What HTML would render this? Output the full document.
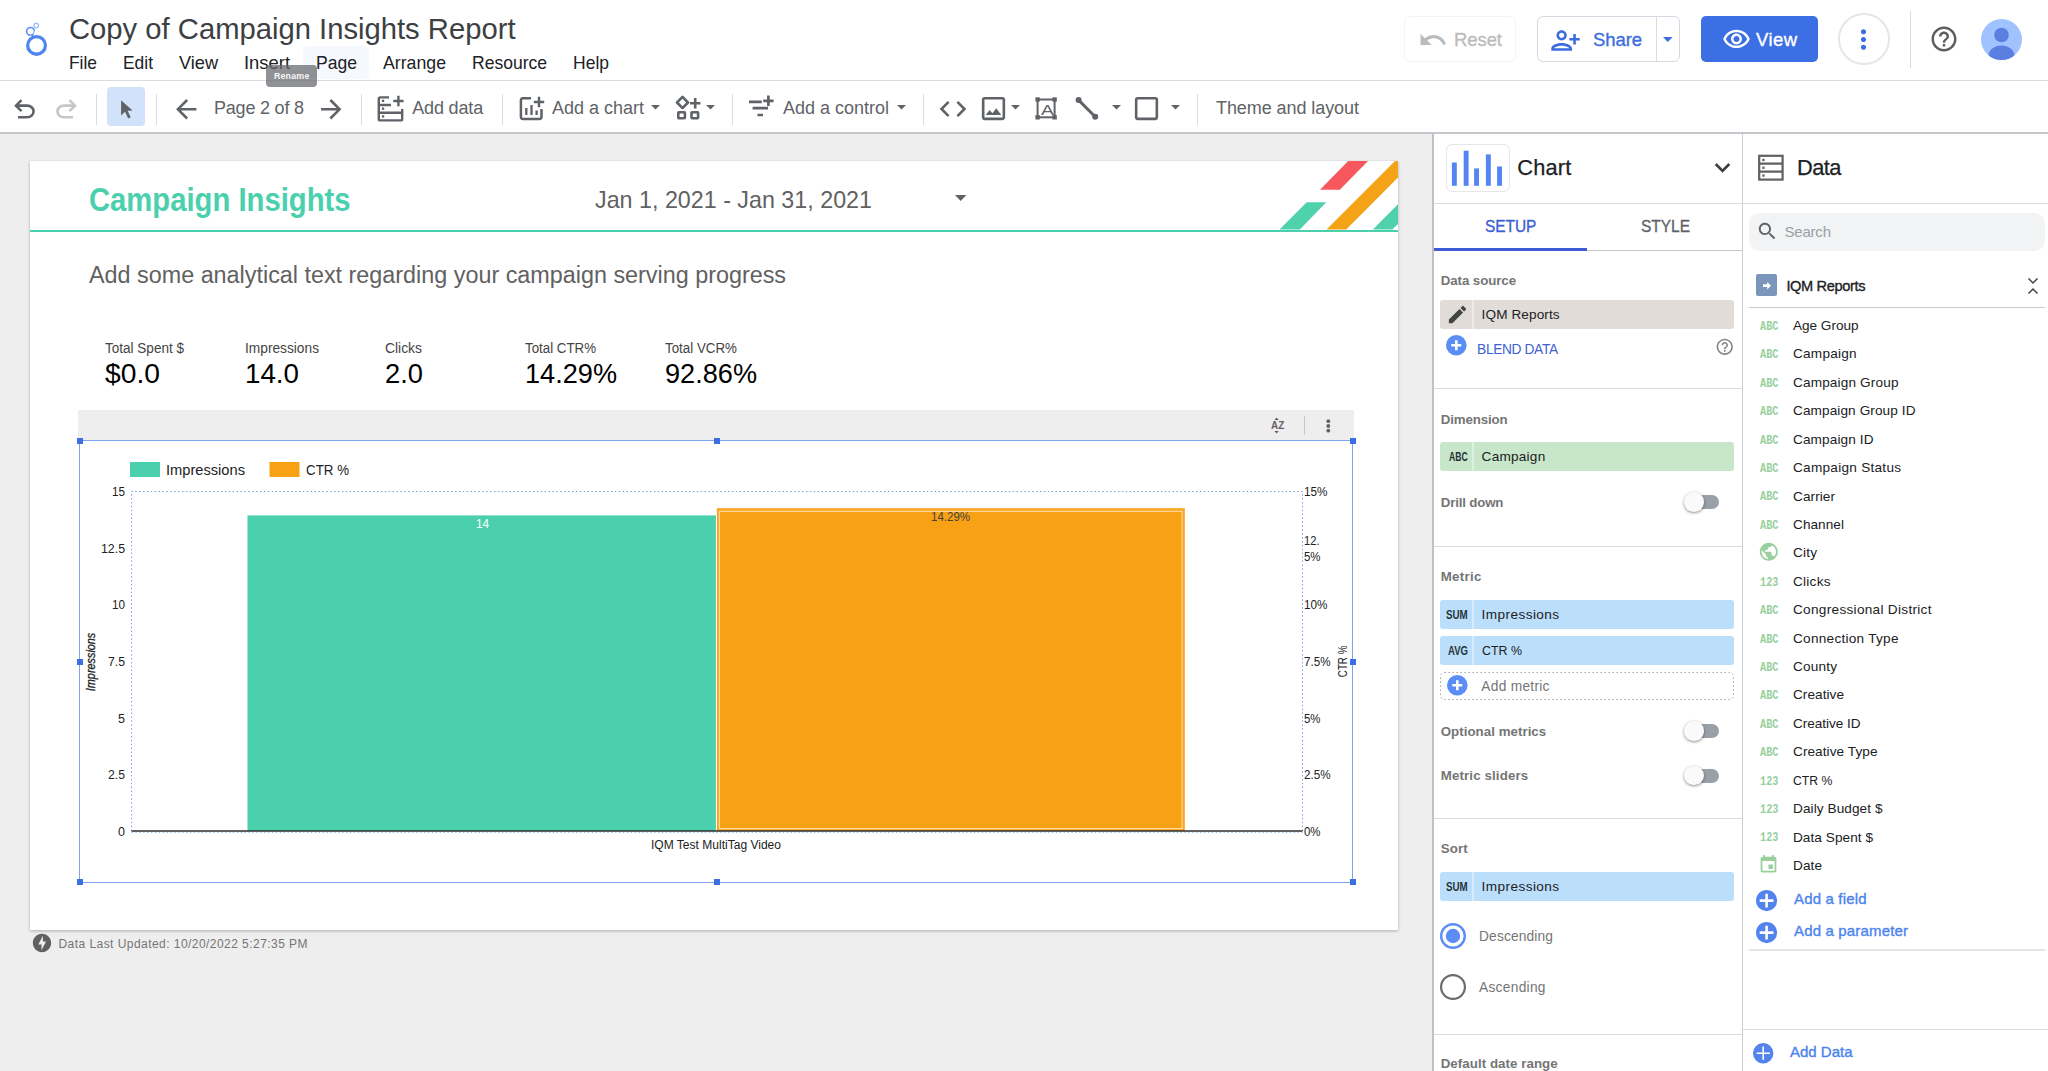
<!DOCTYPE html>
<html lang="en"><head><meta charset="utf-8"><title>Copy of Campaign Insights Report</title>
<style>
html,body{margin:0;padding:0;}
body{width:2048px;height:1071px;overflow:hidden;position:relative;background:#fff;font-family:"Liberation Sans",sans-serif;}
.a{position:absolute;box-sizing:border-box;}
.t{position:absolute;white-space:pre;}
svg{position:absolute;overflow:visible;}
</style></head>
<body>
<div class="a" style="left:0px;top:0px;width:2048px;height:80px;background:#fff;"></div>
<div class="a" style="left:0px;top:80px;width:2048px;height:1px;background:#dadce0;"></div>
<svg style="left:20px;top:18px" width="34" height="44" viewBox="0 0 34 44"><circle cx="10.5" cy="13.4" r="3.85" fill="none" stroke="#5b8ff5" stroke-width="1.6"/><path d="M12.4 16.2 L13.9 20.2" stroke="#4f86ee" stroke-width="1.8"/><path d="M16.1 9.6 L13.3 19.4" stroke="#fff" stroke-width="1.1"/><circle cx="16.55" cy="27.4" r="8.85" fill="none" stroke="#4f86ee" stroke-width="3.3"/><circle cx="16.2" cy="7.6" r="2.3" fill="none" stroke="#8ab4f8" stroke-width="1.05"/></svg>
<span class="t" style='left:68.60px;top:13.60px;font-size:29.5px;line-height:29.5px;color:#3c4043;font-family:"Liberation Sans", sans-serif;transform:scaleX(0.9902);transform-origin:0 50%;'>Copy of Campaign Insights Report</span>
<div class="a" style="left:303.4px;top:46.2px;width:65.6px;height:32.5px;background:#f5f8fd;border-radius:5px;"></div>
<span class="t" style='left:69.00px;top:53.71px;font-size:18.2px;line-height:18.2px;color:#202124;font-family:"Liberation Sans", sans-serif;transform:scaleX(0.9552);transform-origin:0 50%;'>File</span>
<span class="t" style='left:123.00px;top:53.71px;font-size:18.2px;line-height:18.2px;color:#202124;font-family:"Liberation Sans", sans-serif;transform:scaleX(0.9571);transform-origin:0 50%;'>Edit</span>
<span class="t" style='left:179.00px;top:53.71px;font-size:18.2px;line-height:18.2px;color:#202124;font-family:"Liberation Sans", sans-serif;transform:scaleX(0.9976);transform-origin:0 50%;'>View</span>
<span class="t" style='left:244.00px;top:53.71px;font-size:18.2px;line-height:18.2px;color:#202124;font-family:"Liberation Sans", sans-serif;transform:scaleX(1.0110);transform-origin:0 50%;'>Insert</span>
<span class="t" style='left:316.00px;top:53.71px;font-size:18.2px;line-height:18.2px;color:#202124;font-family:"Liberation Sans", sans-serif;transform:scaleX(0.9651);transform-origin:0 50%;'>Page</span>
<span class="t" style='left:383.00px;top:53.71px;font-size:18.2px;line-height:18.2px;color:#202124;font-family:"Liberation Sans", sans-serif;transform:scaleX(0.9734);transform-origin:0 50%;'>Arrange</span>
<span class="t" style='left:472.00px;top:53.71px;font-size:18.2px;line-height:18.2px;color:#202124;font-family:"Liberation Sans", sans-serif;transform:scaleX(0.9635);transform-origin:0 50%;'>Resource</span>
<span class="t" style='left:573.00px;top:53.71px;font-size:18.2px;line-height:18.2px;color:#202124;font-family:"Liberation Sans", sans-serif;transform:scaleX(0.9624);transform-origin:0 50%;'>Help</span>
<div class="a" style="left:1404px;top:16px;width:112px;height:45.5px;background:#fff;border:1px solid #f1f3f4;border-radius:6px;"></div>
<svg style="left:1418.3px;top:25.2px" width="30" height="30" viewBox="0 0 24 24" ><path fill="#bcbcbc" d="M12.5 8c-2.65 0-5.05.99-6.9 2.6L2 7v9h9l-3.62-3.62c1.39-1.16 3.16-1.88 5.12-1.88 3.54 0 6.55 2.31 7.6 5.5l2.37-.78C21.08 11.03 17.15 8 12.5 8z"/></svg>
<span class="t" style='left:1454.00px;top:31.01px;font-size:18.5px;line-height:18.5px;color:#bcbcbc;font-family:"Liberation Sans", sans-serif;letter-spacing:-0.082px;-webkit-text-stroke:.35px;'>Reset</span>
<div class="a" style="left:1537px;top:16px;width:142.7px;height:45.5px;background:#fff;border:1px solid #d5d9e2;border-radius:6px;"></div>
<div class="a" style="left:1656px;top:17px;width:1px;height:43.5px;background:#dadce0;"></div>
<svg style="left:1549.8px;top:24.8px" width="31" height="31" viewBox="0 0 24 24" ><path fill="#3c6de0" d="M13 8c0-2.21-1.79-4-4-4S5 5.79 5 8s1.79 4 4 4 4-1.79 4-4zm-2 0c0 1.1-.9 2-2 2s-2-.9-2-2 .9-2 2-2 2 .9 2 2zM1 18v2h16v-2c0-2.66-5.33-4-8-4s-8 1.34-8 4zm2 0c.2-.71 3.3-2 6-2 2.69 0 5.78 1.28 6 2H3zm17-3v-3h3v-2h-3V7h-2v3h-3v2h3v3h2z"/></svg>
<span class="t" style='left:1593.00px;top:31.01px;font-size:18.5px;line-height:18.5px;color:#3c6de0;font-family:"Liberation Sans", sans-serif;letter-spacing:-0.094px;-webkit-text-stroke:.35px;'>Share</span>
<svg style="left:1663.10px;top:37.20px" width="9.6" height="5" viewBox="0 0 9.6 5"><path fill="#3c6de0" d="M0 0 H9.6 L4.8 5 Z"/></svg>
<div class="a" style="left:1701.3px;top:16px;width:116.3px;height:46px;background:#3b6fe3;border-radius:5px;"></div>
<svg style="left:1721.5px;top:24.5px" width="29" height="29" viewBox="0 0 24 24" ><path fill="#fff" d="M12 6c3.79 0 7.17 2.13 8.82 5.5C19.17 14.87 15.79 17 12 17s-7.17-2.13-8.82-5.5C4.83 8.13 8.21 6 12 6m0-2C7 4 2.73 7.11 1 11.5 2.73 15.89 7 19 12 19s9.27-3.11 11-7.5C21.27 7.11 17 4 12 4zm0 5c1.38 0 2.5 1.12 2.5 2.5S13.38 14 12 14s-2.5-1.12-2.5-2.5S10.62 9 12 9m0-2c-2.48 0-4.5 2.02-4.5 4.5S9.52 16 12 16s4.5-2.02 4.5-4.5S14.48 7 12 7z"/></svg>
<span class="t" style='left:1756.00px;top:31.01px;font-size:18.5px;line-height:18.5px;color:#fff;font-family:"Liberation Sans", sans-serif;letter-spacing:0.411px;-webkit-text-stroke:.35px;'>View</span>
<div class="a" style="left:1838px;top:13.2px;width:51.5px;height:51.5px;background:#fff;border:2px solid #e6e6e6;border-radius:50%;"></div>
<svg style="left:1848.4px;top:23.7px" width="31" height="31" viewBox="0 0 24 24" ><path fill="#3c6de0" d="M12 8c1.1 0 2-.9 2-2s-.9-2-2-2-2 .9-2 2 .9 2 2 2zm0 2c-1.1 0-2 .9-2 2s.9 2 2 2 2-.9 2-2-.9-2-2-2zm0 6c-1.1 0-2 .9-2 2s.9 2 2 2 2-.9 2-2-.9-2-2-2z"/></svg>
<div class="a" style="left:1910px;top:11px;width:1px;height:57px;background:#dadce0;"></div>
<svg style="left:1929px;top:24px" width="30" height="30" viewBox="0 0 24 24" ><path fill="#5e5e5e" d="M11 18h2v-2h-2v2zm1-16C6.48 2 2 6.48 2 12s4.48 10 10 10 10-4.48 10-10S17.52 2 12 2zm0 18c-4.41 0-8-3.59-8-8s3.59-8 8-8 8 3.59 8 8-3.59 8-8 8zm0-14c-2.21 0-4 1.79-4 4h2c0-1.1.9-2 2-2s2 .9 2 2c0 2-3 1.75-3 5h2c0-2.25 3-2.5 3-5 0-2.21-1.79-4-4-4z"/></svg>
<svg style="left:1981px;top:19px" width="41" height="41" viewBox="0 0 41 41"><defs><clipPath id="av"><circle cx="20.5" cy="20.5" r="20.5"/></clipPath></defs><circle cx="20.5" cy="20.5" r="20.5" fill="#a0c3ff"/><g clip-path="url(#av)" fill="#5b7fe0"><circle cx="20.5" cy="16" r="7.3"/><ellipse cx="20.5" cy="37" rx="13" ry="10.5"/></g></svg>
<div class="a" style="left:0px;top:81px;width:2048px;height:51.5px;background:#fff;"></div>
<div class="a" style="left:0px;top:132px;width:2048px;height:2px;background:#c4c7cc;"></div>
<svg style="left:9.4px;top:93.8px" width="31" height="31" viewBox="0 0 24 24" ><path fill="#5f6368" d="M7 19v-2h7.1q1.575 0 2.738-1T18 13.5 16.838 11 14.1 10H7.8l2.6 2.6L9 14 4 9l5-5 1.4 1.4L7.8 8h6.3q2.425 0 4.163 1.575T20 13.5t-1.737 3.925T14.1 19z"/></svg>
<svg style="left:51px;top:93.8px" width="31" height="31" viewBox="0 0 24 24"><path fill="#c4c7c9" transform="translate(24 0) scale(-1 1)" d="M7 19v-2h7.1q1.575 0 2.738-1T18 13.5 16.838 11 14.1 10H7.8l2.6 2.6L9 14 4 9l5-5 1.4 1.4L7.8 8h6.3q2.425 0 4.163 1.575T20 13.5t-1.737 3.925T14.1 19z"/></svg>
<div class="a" style="left:95.6px;top:94px;width:1px;height:30.5px;background:#dadce0;"></div>
<div class="a" style="left:156px;top:94px;width:1px;height:30.5px;background:#dadce0;"></div>
<div class="a" style="left:361px;top:94px;width:1px;height:30.5px;background:#dadce0;"></div>
<div class="a" style="left:502px;top:94px;width:1px;height:30.5px;background:#dadce0;"></div>
<div class="a" style="left:732px;top:94px;width:1px;height:30.5px;background:#dadce0;"></div>
<div class="a" style="left:923px;top:94px;width:1px;height:30.5px;background:#dadce0;"></div>
<div class="a" style="left:1197.3px;top:94px;width:1px;height:30.5px;background:#dadce0;"></div>
<div class="a" style="left:107px;top:87.3px;width:38.2px;height:38.5px;background:#d3e2fb;border-radius:4px;"></div>
<svg style="left:119px;top:98px" width="16" height="22" viewBox="0 0 16 22"><path d="M2.1 2.3 L2.1 17.4 L6 13.8 L9.2 20.4 L11.7 19.2 L8.6 12.7 L13.6 12.4 Z" fill="#5f6368"/></svg>
<svg style="left:171px;top:93.6px" width="30.5" height="30.5" viewBox="0 0 24 24" ><path fill="#5f6368" d="M20 11H7.83l5.59-5.59L12 4l-8 8 8 8 1.41-1.41L7.83 13H20v-2z"/></svg>
<span class="t" style='left:214.00px;top:99.01px;font-size:18px;line-height:18px;color:#5f6368;font-family:"Liberation Sans", sans-serif;letter-spacing:-0.208px;'>Page 2 of 8</span>
<svg style="left:316.3px;top:93.6px" width="30.5" height="30.5" viewBox="0 0 24 24" ><path fill="#5f6368" d="M12 4l-1.41 1.41L16.17 11H4v2h12.17l-5.58 5.59L12 20l8-8z"/></svg>
<svg style="left:376px;top:94px" width="30" height="30" viewBox="0 0 30 30"><g fill="none" stroke="#5f6368" stroke-width="2.4" stroke-linejoin="round"><path d="M13 3.4 H4.2 Q2.8 3.4 2.8 4.8 V25 Q2.8 26.4 4.2 26.4 H24.8 Q26.2 26.4 26.2 25 V15"/><path d="M2.8 11 H15 M2.8 18.7 H26.2"/><path d="M22.4 1.8 V12.2 M17.2 7 H27.6"/></g><g fill="#5f6368"><rect x="5.9" y="5.7" width="2.3" height="2.3"/><rect x="5.9" y="13.5" width="2.3" height="2.3"/><rect x="5.9" y="21.3" width="2.3" height="2.3"/></g></svg>
<span class="t" style='left:412.20px;top:99.32px;font-size:18px;line-height:18px;color:#5f6368;font-family:"Liberation Sans", sans-serif;letter-spacing:-0.152px;'>Add data</span>
<svg style="left:518px;top:94px" width="28" height="28" viewBox="0 0 28 28"><g fill="none" stroke="#5f6368" stroke-width="2.5"><path d="M13 4.3 H5 Q2.9 4.3 2.9 6.4 V22.8 Q2.9 24.9 5 24.9 H21.4 Q23.5 24.9 23.5 22.8 V15"/><path d="M21 2.8 V13.2 M15.8 8 H26.2"/><path d="M8.3 14 V21 M13.5 11 V21 M18.6 16.5 V21" stroke-width="2.3"/></g></svg>
<span class="t" style='left:552.00px;top:99.01px;font-size:18px;line-height:18px;color:#5f6368;font-family:"Liberation Sans", sans-serif;letter-spacing:-0.006px;'>Add a chart</span>
<svg style="left:651.40px;top:105.10px" width="9" height="4.6" viewBox="0 0 9 4.6"><path fill="#5f6368" d="M0 0 H9 L4.5 4.6 Z"/></svg>
<svg style="left:674px;top:94px" width="28" height="28" viewBox="0 0 28 28"><g fill="none" stroke="#5f6368" stroke-width="2.6"><path d="M8.5 2.9 L14 8.5 L8.5 14.1 L3 8.5 Z" stroke-linejoin="round"/><rect x="4.3" y="18.2" width="6.6" height="6" rx="0.6"/><rect x="17.5" y="18.2" width="6.6" height="6" rx="0.6"/><path d="M21.2 4 V14.4 M16 9.2 H26.4"/></g></svg>
<svg style="left:705.80px;top:105.10px" width="9" height="4.6" viewBox="0 0 9 4.6"><path fill="#5f6368" d="M0 0 H9 L4.5 4.6 Z"/></svg>
<svg style="left:747px;top:94px" width="28" height="28" viewBox="0 0 28 28"><g fill="none" stroke="#5f6368" stroke-width="2.7"><path d="M2 7.8 H14.8 M5.6 14.2 H21 M10.5 21 H16"/><path d="M21.4 1.6 V12 M16.2 6.8 H26.6"/></g></svg>
<span class="t" style='left:783.00px;top:99.01px;font-size:18px;line-height:18px;color:#5f6368;font-family:"Liberation Sans", sans-serif;letter-spacing:-0.007px;'>Add a control</span>
<svg style="left:896.50px;top:105.10px" width="9" height="4.6" viewBox="0 0 9 4.6"><path fill="#5f6368" d="M0 0 H9 L4.5 4.6 Z"/></svg>
<svg style="left:937px;top:93px" width="32" height="32" viewBox="0 0 24 24" ><path fill="#5f6368" d="M9.4 16.6L4.8 12l4.6-4.6L8 6l-6 6 6 6 1.4-1.4zm5.2 0l4.6-4.6-4.6-4.6L16 6l6 6-6 6-1.4-1.4z"/></svg>
<svg style="left:977.5px;top:93px" width="31" height="31" viewBox="0 0 24 24" ><path fill="#5f6368" d="M19 5v14H5V5h14m0-2H5c-1.1 0-2 .9-2 2v14c0 1.1.9 2 2 2h14c1.1 0 2-.9 2-2V5c0-1.1-.9-2-2-2zm-4.86 8.86l-3 3.87L9 13.14 6 17h12l-3.86-5.14z"/></svg>
<svg style="left:1010.70px;top:105.10px" width="9" height="4.6" viewBox="0 0 9 4.6"><path fill="#5f6368" d="M0 0 H9 L4.5 4.6 Z"/></svg>
<svg style="left:1033px;top:95px" width="27" height="27" viewBox="0 0 27 27"><rect x="4.6" y="4.5" width="17" height="17.8" fill="none" stroke="#5f6368" stroke-width="2"/><g fill="#5f6368"><rect x="2.4" y="2.3" width="4.4" height="4.4"/><rect x="19.4" y="2.3" width="4.4" height="4.4"/><rect x="2.4" y="20.1" width="4.4" height="4.4"/><rect x="19.4" y="20.1" width="4.4" height="4.4"/></g></svg>
<span class="t" style='left:1040.60px;top:102.51px;font-size:14.5px;line-height:14.5px;color:#5f6368;font-family:"Liberation Sans", sans-serif;transform:scaleX(1.3234);transform-origin:0 50%;'>A</span>
<svg style="left:1074px;top:95px" width="27" height="27" viewBox="0 0 27 27"><path d="M4.6 5.1 L21.2 21.8" stroke="#5f6368" stroke-width="3"/><circle cx="4.6" cy="5.1" r="3" fill="#5f6368"/><circle cx="21.2" cy="21.8" r="3" fill="#5f6368"/></svg>
<svg style="left:1111.50px;top:105.10px" width="9" height="4.6" viewBox="0 0 9 4.6"><path fill="#5f6368" d="M0 0 H9 L4.5 4.6 Z"/></svg>
<svg style="left:1131px;top:93px" width="31" height="31" viewBox="0 0 24 24" ><path fill="#5f6368" d="M19 5v14H5V5h14m0-2H5c-1.1 0-2 .9-2 2v14c0 1.1.9 2 2 2h14c1.1 0 2-.9 2-2V5c0-1.1-.9-2-2-2z"/></svg>
<svg style="left:1170.50px;top:105.10px" width="9" height="4.6" viewBox="0 0 9 4.6"><path fill="#5f6368" d="M0 0 H9 L4.5 4.6 Z"/></svg>
<span class="t" style='left:1216.00px;top:99.01px;font-size:18px;line-height:18px;color:#5f6368;font-family:"Liberation Sans", sans-serif;letter-spacing:-0.073px;'>Theme and layout</span>
<div class="a" style="left:265.9px;top:65.2px;width:50.7px;height:21.5px;background:rgba(104,107,112,.74);border-radius:4px;"></div>
<span class="t" style='left:273.90px;top:71.81px;font-size:8.8px;line-height:8.8px;color:#f6f6f6;font-family:"Liberation Sans", sans-serif;font-weight:700;letter-spacing:0.233px;'>Rename</span>
<div class="a" style="left:0px;top:134px;width:1433px;height:937px;background:#eeeeee;"></div>
<div class="a" style="left:30px;top:161px;width:1368px;height:769px;background:#fff;box-shadow:0 1px 3px rgba(0,0,0,.28);"></div>
<span class="t" style='left:88.80px;top:184.00px;font-size:32.5px;line-height:32.5px;color:#4bd0ad;font-family:"Liberation Sans", sans-serif;font-weight:700;transform:scaleX(0.8994);transform-origin:0 50%;'>Campaign Insights</span>
<div class="a" style="left:30px;top:229.5px;width:1368px;height:2px;background:#4bd0ad;"></div>
<svg style="left:1278px;top:161px" width="120" height="69" viewBox="0 0 120 69"><polygon points="70.2,0 90,0 61.8,28.7 42,28.7" fill="#f6585d"/><polygon points="28.7,41.2 48.3,41.2 21.8,68.6 1.5,68.6" fill="#4fd1ac"/><polygon points="117,0 120,0 120,16.6 68.2,68.6 48.5,68.6" fill="#f4a216"/><polygon points="120,43.2 120,63 114.3,68.6 94.8,68.6" fill="#4fd1ac"/></svg>
<span class="t" style='left:595.00px;top:187.71px;font-size:24px;line-height:24px;color:#616161;font-family:"Liberation Sans", sans-serif;transform:scaleX(0.9700);transform-origin:0 50%;'>Jan 1, 2021 - Jan 31, 2021</span>
<svg style="left:954.80px;top:195.20px" width="11.4" height="6" viewBox="0 0 11.4 6"><path fill="#616161" d="M0 0 H11.4 L5.7 6 Z"/></svg>
<span class="t" style='left:88.50px;top:263.50px;font-size:23.5px;line-height:23.5px;color:#616161;font-family:"Liberation Sans", sans-serif;transform:scaleX(0.9937);transform-origin:0 50%;'>Add some analytical text regarding your campaign serving progress</span>
<span class="t" style='left:105.00px;top:341.01px;font-size:14px;line-height:14px;color:#444;font-family:"Liberation Sans", sans-serif;transform:scaleX(0.9665);transform-origin:0 50%;'>Total Spent $</span>
<span class="t" style='left:105.00px;top:360.00px;font-size:28px;line-height:28px;color:#000;font-family:"Liberation Sans", sans-serif;transform:scaleX(1.0092);transform-origin:0 50%;'>$0.0</span>
<span class="t" style='left:245.00px;top:341.01px;font-size:14px;line-height:14px;color:#444;font-family:"Liberation Sans", sans-serif;transform:scaleX(0.9805);transform-origin:0 50%;'>Impressions</span>
<span class="t" style='left:245.00px;top:360.00px;font-size:28px;line-height:28px;color:#000;font-family:"Liberation Sans", sans-serif;transform:scaleX(0.9908);transform-origin:0 50%;'>14.0</span>
<span class="t" style='left:385.00px;top:341.01px;font-size:14px;line-height:14px;color:#444;font-family:"Liberation Sans", sans-serif;transform:scaleX(0.9908);transform-origin:0 50%;'>Clicks</span>
<span class="t" style='left:385.00px;top:360.00px;font-size:28px;line-height:28px;color:#000;font-family:"Liberation Sans", sans-serif;transform:scaleX(0.9759);transform-origin:0 50%;'>2.0</span>
<span class="t" style='left:525.00px;top:341.01px;font-size:14px;line-height:14px;color:#444;font-family:"Liberation Sans", sans-serif;transform:scaleX(0.9506);transform-origin:0 50%;'>Total CTR%</span>
<span class="t" style='left:525.00px;top:360.00px;font-size:28px;line-height:28px;color:#000;font-family:"Liberation Sans", sans-serif;transform:scaleX(0.9687);transform-origin:0 50%;'>14.29%</span>
<span class="t" style='left:665.00px;top:341.01px;font-size:14px;line-height:14px;color:#444;font-family:"Liberation Sans", sans-serif;transform:scaleX(0.9540);transform-origin:0 50%;'>Total VCR%</span>
<span class="t" style='left:665.00px;top:360.00px;font-size:28px;line-height:28px;color:#000;font-family:"Liberation Sans", sans-serif;transform:scaleX(0.9687);transform-origin:0 50%;'>92.86%</span>
<div class="a" style="left:78px;top:409.5px;width:1276px;height:31px;background:#eeeeee;"></div>
<span class="t" style='left:1270.50px;top:420.21px;font-size:11px;line-height:11px;color:#616161;font-family:"Liberation Sans", sans-serif;font-weight:700;transform:scaleX(0.8997);transform-origin:0 50%;'>AZ</span>
<svg style="left:1272px;top:416px" width="12" height="20" viewBox="0 0 12 20"><path d="M2.4 4 L4.6 1.5 L6.8 4 Z M2.4 14.9 L4.6 17.4 L6.8 14.9 Z" fill="#616161"/></svg>
<div class="a" style="left:1304px;top:416.2px;width:1px;height:18.5px;background:#c8c8c8;"></div>
<svg style="left:1325px;top:418px" width="7" height="16" viewBox="0 0 7 16"><g fill="#616161"><circle cx="3.3" cy="3.2" r="1.9"/><circle cx="3.3" cy="8" r="1.9"/><circle cx="3.3" cy="12.7" r="1.9"/></g></svg>
<svg style="left:80px;top:441px" width="1274" height="442" viewBox="0 0 1274 442"><rect x="0" y="0" width="1274" height="442" fill="#fff"/><rect x="50" y="21" width="30" height="15" fill="#4bd0ad"/><rect x="189.5" y="21" width="30" height="15" fill="#f8a115"/><path d="M51.5 390 V50.5 H1222.5 V390" fill="none" stroke="#6f9af0" stroke-width="1" stroke-dasharray="1.4 2.5"/><rect x="167.5" y="74.4" width="468.4" height="315.6" fill="#4bd0ad"/><rect x="636.9" y="67.2" width="467.9" height="322.8" fill="#f9a41f"/><rect x="639.4" y="70.3" width="462.7" height="317.3" fill="#f8a115" stroke="#fdd9a2" stroke-width="1.2"/><path d="M51.5 390 H1222.5" stroke="#2b2b2b" stroke-width="1.7"/><path d="M51.5 391.5 H1222.5" stroke="#9bbcf5" stroke-width="1" stroke-dasharray="1.4 2.5"/></svg>
<span class="t" style='left:166.00px;top:462.60px;font-size:14.5px;line-height:14.5px;color:#222;font-family:"Liberation Sans", sans-serif;transform:scaleX(1.0106);transform-origin:0 50%;'>Impressions</span>
<span class="t" style='left:305.50px;top:462.60px;font-size:14.5px;line-height:14.5px;color:#222;font-family:"Liberation Sans", sans-serif;transform:scaleX(0.9201);transform-origin:0 50%;'>CTR %</span>
<span class="t" style='left:475.60px;top:518.11px;font-size:12.8px;line-height:12.8px;color:#fff;font-family:"Liberation Sans", sans-serif;transform:scaleX(0.9273);transform-origin:0 50%;'>14</span>
<span class="t" style='left:931.20px;top:510.81px;font-size:12.8px;line-height:12.8px;color:#45423a;font-family:"Liberation Sans", sans-serif;transform:scaleX(0.8985);transform-origin:0 50%;'>14.29%</span>
<span class="t" style='left:112.00px;top:485.71px;font-size:12px;line-height:12px;color:#222;font-family:"Liberation Sans", sans-serif;transform:scaleX(0.9731);transform-origin:0 50%;'>15</span>
<span class="t" style='left:101.00px;top:542.71px;font-size:12px;line-height:12px;color:#222;font-family:"Liberation Sans", sans-serif;transform:scaleX(1.0274);transform-origin:0 50%;'>12.5</span>
<span class="t" style='left:112.00px;top:599.21px;font-size:12px;line-height:12px;color:#222;font-family:"Liberation Sans", sans-serif;transform:scaleX(0.9731);transform-origin:0 50%;'>10</span>
<span class="t" style='left:108.00px;top:656.21px;font-size:12px;line-height:12px;color:#222;font-family:"Liberation Sans", sans-serif;transform:scaleX(1.0187);transform-origin:0 50%;'>7.5</span>
<span class="t" style='left:118.00px;top:712.71px;font-size:12px;line-height:12px;color:#222;font-family:"Liberation Sans", sans-serif;transform:scaleX(1.0467);transform-origin:0 50%;'>5</span>
<span class="t" style='left:108.00px;top:769.21px;font-size:12px;line-height:12px;color:#222;font-family:"Liberation Sans", sans-serif;transform:scaleX(1.0187);transform-origin:0 50%;'>2.5</span>
<span class="t" style='left:118.00px;top:825.71px;font-size:12px;line-height:12px;color:#222;font-family:"Liberation Sans", sans-serif;transform:scaleX(1.0467);transform-origin:0 50%;'>0</span>
<span class="t" style='left:1304.00px;top:485.71px;font-size:12px;line-height:12px;color:#222;font-family:"Liberation Sans", sans-serif;transform:scaleX(0.9779);transform-origin:0 50%;'>15%</span>
<span class="t" style='left:1304.00px;top:534.71px;font-size:12px;line-height:12px;color:#222;font-family:"Liberation Sans", sans-serif;transform:scaleX(0.9288);transform-origin:0 50%;'>12.</span>
<span class="t" style='left:1304.00px;top:550.71px;font-size:12px;line-height:12px;color:#222;font-family:"Liberation Sans", sans-serif;transform:scaleX(0.9514);transform-origin:0 50%;'>5%</span>
<span class="t" style='left:1304.00px;top:599.21px;font-size:12px;line-height:12px;color:#222;font-family:"Liberation Sans", sans-serif;transform:scaleX(0.9779);transform-origin:0 50%;'>10%</span>
<span class="t" style='left:1304.00px;top:656.21px;font-size:12px;line-height:12px;color:#222;font-family:"Liberation Sans", sans-serif;transform:scaleX(0.9686);transform-origin:0 50%;'>7.5%</span>
<span class="t" style='left:1304.00px;top:712.71px;font-size:12px;line-height:12px;color:#222;font-family:"Liberation Sans", sans-serif;transform:scaleX(0.9514);transform-origin:0 50%;'>5%</span>
<span class="t" style='left:1304.00px;top:769.21px;font-size:12px;line-height:12px;color:#222;font-family:"Liberation Sans", sans-serif;transform:scaleX(0.9686);transform-origin:0 50%;'>2.5%</span>
<span class="t" style='left:1304.00px;top:825.71px;font-size:12px;line-height:12px;color:#222;font-family:"Liberation Sans", sans-serif;transform:scaleX(0.9514);transform-origin:0 50%;'>0%</span>
<span class="t" style='left:60.15px;top:656.11px;font-size:11.9px;line-height:11.9px;color:#222;font-family:"Liberation Sans", sans-serif;font-style:italic;-webkit-text-stroke:.3px;transform:rotate(-90deg) scaleX(0.9125);transform-origin:50% 50%;'>Impressions</span>
<span class="t" style='left:1322.68px;top:655.42px;font-size:12.8px;line-height:12.8px;color:#222;font-family:"Liberation Sans", sans-serif;transform:rotate(-90deg) scaleX(0.7664);transform-origin:50% 50%;'>CTR %</span>
<span class="t" style='left:651.00px;top:838.80px;font-size:12.5px;line-height:12.5px;color:#222;font-family:"Liberation Sans", sans-serif;transform:scaleX(0.9627);transform-origin:0 50%;'>IQM Test MultiTag Video</span>
<div class="a" style="left:79.5px;top:440px;width:1274px;height:1.4px;background:#7ea2ee;"></div>
<div class="a" style="left:79.5px;top:881.6px;width:1274px;height:1.4px;background:#7ea2ee;"></div>
<div class="a" style="left:79px;top:440px;width:1.4px;height:443px;background:#7ea2ee;"></div>
<div class="a" style="left:1352px;top:440px;width:1.3px;height:443px;background:#7ea2ee;"></div>
<div class="a" style="left:76.7px;top:437.7px;width:6px;height:6px;background:#3b6fe3;"></div>
<div class="a" style="left:76.7px;top:658.7px;width:6px;height:6px;background:#3b6fe3;"></div>
<div class="a" style="left:76.7px;top:879.1px;width:6px;height:6px;background:#3b6fe3;"></div>
<div class="a" style="left:713.5px;top:437.7px;width:6px;height:6px;background:#3b6fe3;"></div>
<div class="a" style="left:713.5px;top:879.1px;width:6px;height:6px;background:#3b6fe3;"></div>
<div class="a" style="left:1350.2px;top:437.7px;width:6px;height:6px;background:#3b6fe3;"></div>
<div class="a" style="left:1350.2px;top:658.7px;width:6px;height:6px;background:#3b6fe3;"></div>
<div class="a" style="left:1350.2px;top:879.1px;width:6px;height:6px;background:#3b6fe3;"></div>
<svg style="left:31px;top:932px" width="22" height="22" viewBox="0 0 24 24" ><path fill="#616161" d="M12 2.02c-5.51 0-9.98 4.47-9.98 9.98s4.47 9.98 9.98 9.98 9.98-4.47 9.98-9.98S17.51 2.02 12 2.02zM11.48 20v-6.26H8L13 4v6.26h3.35L11.48 20z"/></svg>
<span class="t" style='left:58.50px;top:938.01px;font-size:12px;line-height:12px;color:#757575;font-family:"Liberation Sans", sans-serif;letter-spacing:0.449px;'>Data Last Updated: 10/20/2022 5:27:35 PM</span>
<div class="a" style="left:1433px;top:134px;width:615px;height:937px;background:#fff;"></div>
<div class="a" style="left:1432px;top:134px;width:2px;height:937px;background:#bfc1c7;"></div>
<div class="a" style="left:1742px;top:134px;width:1px;height:937px;background:#cdd0d6;"></div>
<div class="a" style="left:1434px;top:203px;width:614px;height:1px;background:#dadce0;"></div>
<div class="a" style="left:1446px;top:144px;width:63.5px;height:47.7px;background:#fff;border:1px solid #e6e6ea;border-radius:6px;"></div>
<svg style="left:1446px;top:144.5px" width="64" height="47" viewBox="0 0 64 47"><rect x="5.9" y="17.5" width="4.9" height="23.299999999999997" fill="#5585f2"/><rect x="17.7" y="5.7" width="4.9" height="35.099999999999994" fill="#5585f2"/><rect x="28.1" y="23.4" width="4.9" height="17.4" fill="#5585f2"/><rect x="39.9" y="9.4" width="4.9" height="31.4" fill="#5585f2"/><rect x="51.1" y="21.5" width="4.9" height="19.299999999999997" fill="#5585f2"/></svg>
<span class="t" style='left:1517.30px;top:157.00px;font-size:21.8px;line-height:21.8px;color:#202124;font-family:"Liberation Sans", sans-serif;letter-spacing:0.172px;-webkit-text-stroke:.25px;'>Chart</span>
<svg style="left:1707px;top:152px" width="31" height="31" viewBox="0 0 24 24" ><path fill="#3c4043" d="M16.59 8.59L12 13.17 7.41 8.59 6 10l6 6 6-6z"/></svg>
<span class="t" style='left:1484.60px;top:218.02px;font-size:16.5px;line-height:16.5px;color:#3f5fd2;font-family:"Liberation Sans", sans-serif;-webkit-text-stroke:.35px;transform:scaleX(0.9343);transform-origin:0 50%;'>SETUP</span>
<span class="t" style='left:1640.50px;top:218.02px;font-size:16.5px;line-height:16.5px;color:#5f6368;font-family:"Liberation Sans", sans-serif;-webkit-text-stroke:.35px;transform:scaleX(0.9372);transform-origin:0 50%;'>STYLE</span>
<div class="a" style="left:1434px;top:250px;width:308px;height:1px;background:#c4c7cc;"></div>
<div class="a" style="left:1434px;top:248px;width:153px;height:3px;background:#3c5bd4;"></div>
<span class="t" style='left:1440.70px;top:274.20px;font-size:13.3px;line-height:13.3px;color:#757575;font-family:"Liberation Sans", sans-serif;font-weight:700;letter-spacing:-0.072px;'>Data source</span>
<div class="a" style="left:1440px;top:300px;width:294px;height:28.5px;background:#e1dcd8;border-radius:3px;"></div>
<div class="a" style="left:1472.3px;top:300px;width:1.6px;height:28.5px;background:rgba(255,255,255,.4);"></div>
<svg style="left:1445.5px;top:303px" width="23" height="23" viewBox="0 0 24 24" ><path fill="#444" d="M3 17.25V21h3.75L17.81 9.94l-3.75-3.75L3 17.25zM20.71 7.04c.39-.39.39-1.02 0-1.41l-2.34-2.34c-.39-.39-1.02-.39-1.41 0l-1.83 1.83 3.75 3.75 1.83-1.83z"/></svg>
<span class="t" style='left:1481.60px;top:308.41px;font-size:13.6px;line-height:13.6px;color:#202124;font-family:"Liberation Sans", sans-serif;letter-spacing:0.094px;'>IQM Reports</span>
<svg style="left:1445.7px;top:335.3px" width="20.6" height="20.6" viewBox="0 0 20.6 20.6"><circle cx="10.3" cy="10.3" r="10.3" fill="#5a8df6"/><path d="M10.3 5.300000000000001 V15.3 M5.300000000000001 10.3 H15.3" stroke="#fff" stroke-width="2.6"/></svg>
<span class="t" style='left:1477.10px;top:343.00px;font-size:13.75px;line-height:13.75px;color:#4062d1;font-family:"Liberation Sans", sans-serif;letter-spacing:-0.368px;'>BLEND DATA</span>
<svg style="left:1714.7px;top:337.3px" width="19.5" height="19.5" viewBox="0 0 24 24" ><path fill="#868686" d="M11 18h2v-2h-2v2zm1-16C6.48 2 2 6.48 2 12s4.48 10 10 10 10-4.48 10-10S17.52 2 12 2zm0 18c-4.41 0-8-3.59-8-8s3.59-8 8-8 8 3.59 8 8-3.59 8-8 8zm0-14c-2.21 0-4 1.79-4 4h2c0-1.1.9-2 2-2s2 .9 2 2c0 2-3 1.75-3 5h2c0-2.25 3-2.5 3-5 0-2.21-1.79-4-4-4z"/></svg>
<div class="a" style="left:1434px;top:388px;width:308px;height:1px;background:#dadce0;"></div>
<span class="t" style='left:1440.70px;top:412.51px;font-size:13.3px;line-height:13.3px;color:#757575;font-family:"Liberation Sans", sans-serif;font-weight:700;letter-spacing:-0.123px;'>Dimension</span>
<div class="a" style="left:1440px;top:442px;width:294px;height:28.5px;background:#c8e6c9;border-radius:3px;"></div>
<div class="a" style="left:1472.3px;top:442px;width:1.6px;height:28.5px;background:rgba(255,255,255,.4);"></div>
<span class="t" style='left:1448.60px;top:450.81px;font-size:12.3px;line-height:12.3px;color:#263238;font-family:"Liberation Sans", sans-serif;font-weight:700;transform:scaleX(0.7015);transform-origin:0 50%;'>ABC</span>
<span class="t" style='left:1481.60px;top:450.41px;font-size:13.6px;line-height:13.6px;color:#202124;font-family:"Liberation Sans", sans-serif;letter-spacing:0.233px;'>Campaign</span>
<span class="t" style='left:1440.70px;top:496.20px;font-size:13.3px;line-height:13.3px;color:#757575;font-family:"Liberation Sans", sans-serif;font-weight:700;letter-spacing:-0.163px;'>Drill down</span>
<div class="a" style="left:1691px;top:495px;width:28px;height:14px;background:#9aa0a8;border-radius:7px;"></div>
<div class="a" style="left:1684.3px;top:492.3px;width:19.4px;height:19.4px;background:#fafafa;border-radius:50%;box-shadow:0 1px 3px rgba(0,0,0,.45);"></div>
<div class="a" style="left:1434px;top:546px;width:308px;height:1px;background:#dadce0;"></div>
<span class="t" style='left:1440.70px;top:570.20px;font-size:13.3px;line-height:13.3px;color:#757575;font-family:"Liberation Sans", sans-serif;font-weight:700;letter-spacing:0.286px;'>Metric</span>
<div class="a" style="left:1440px;top:600px;width:294px;height:28.5px;background:#bbdefb;border-radius:3px;"></div>
<div class="a" style="left:1472.3px;top:600px;width:1.6px;height:28.5px;background:rgba(255,255,255,.4);"></div>
<span class="t" style='left:1446.30px;top:608.81px;font-size:12.3px;line-height:12.3px;color:#263238;font-family:"Liberation Sans", sans-serif;font-weight:700;transform:scaleX(0.7941);transform-origin:0 50%;'>SUM</span>
<span class="t" style='left:1481.60px;top:608.41px;font-size:13.6px;line-height:13.6px;color:#202124;font-family:"Liberation Sans", sans-serif;letter-spacing:0.422px;'>Impressions</span>
<div class="a" style="left:1440px;top:636px;width:294px;height:28.5px;background:#bbdefb;border-radius:3px;"></div>
<div class="a" style="left:1472.3px;top:636px;width:1.6px;height:28.5px;background:rgba(255,255,255,.4);"></div>
<span class="t" style='left:1447.60px;top:644.81px;font-size:12.3px;line-height:12.3px;color:#263238;font-family:"Liberation Sans", sans-serif;font-weight:700;transform:scaleX(0.7772);transform-origin:0 50%;'>AVG</span>
<span class="t" style='left:1481.60px;top:644.41px;font-size:13.6px;line-height:13.6px;color:#202124;font-family:"Liberation Sans", sans-serif;transform:scaleX(0.9130);transform-origin:0 50%;'>CTR %</span>
<svg style="left:1440px;top:672px" width="294" height="28" viewBox="0 0 294 28"><rect x="0.5" y="0.5" width="293" height="27" rx="4" fill="none" stroke="#9e9e9e" stroke-width="1" stroke-dasharray="1.4 2.6"/></svg>
<svg style="left:1446.5px;top:675.0px" width="20.6" height="20.6" viewBox="0 0 20.6 20.6"><circle cx="10.3" cy="10.3" r="10.3" fill="#5a8df6"/><path d="M10.3 5.300000000000001 V15.3 M5.300000000000001 10.3 H15.3" stroke="#fff" stroke-width="2.6"/></svg>
<span class="t" style='left:1481.30px;top:680.30px;font-size:13.75px;line-height:13.75px;color:#757575;font-family:"Liberation Sans", sans-serif;letter-spacing:0.276px;'>Add metric</span>
<span class="t" style='left:1440.70px;top:724.81px;font-size:13.3px;line-height:13.3px;color:#757575;font-family:"Liberation Sans", sans-serif;font-weight:700;letter-spacing:0.039px;'>Optional metrics</span>
<div class="a" style="left:1691px;top:724px;width:28px;height:14px;background:#9aa0a8;border-radius:7px;"></div>
<div class="a" style="left:1684.3px;top:721.3px;width:19.4px;height:19.4px;background:#fafafa;border-radius:50%;box-shadow:0 1px 3px rgba(0,0,0,.45);"></div>
<span class="t" style='left:1440.70px;top:769.01px;font-size:13.3px;line-height:13.3px;color:#757575;font-family:"Liberation Sans", sans-serif;font-weight:700;letter-spacing:0.136px;'>Metric sliders</span>
<div class="a" style="left:1691px;top:768.5px;width:28px;height:14px;background:#9aa0a8;border-radius:7px;"></div>
<div class="a" style="left:1684.3px;top:765.8px;width:19.4px;height:19.4px;background:#fafafa;border-radius:50%;box-shadow:0 1px 3px rgba(0,0,0,.45);"></div>
<div class="a" style="left:1434px;top:818px;width:308px;height:1px;background:#dadce0;"></div>
<span class="t" style='left:1440.70px;top:842.01px;font-size:13.3px;line-height:13.3px;color:#757575;font-family:"Liberation Sans", sans-serif;font-weight:700;letter-spacing:0.130px;'>Sort</span>
<div class="a" style="left:1440px;top:872px;width:294px;height:28.5px;background:#bbdefb;border-radius:3px;"></div>
<div class="a" style="left:1472.3px;top:872px;width:1.6px;height:28.5px;background:rgba(255,255,255,.4);"></div>
<span class="t" style='left:1446.30px;top:880.81px;font-size:12.3px;line-height:12.3px;color:#263238;font-family:"Liberation Sans", sans-serif;font-weight:700;transform:scaleX(0.7941);transform-origin:0 50%;'>SUM</span>
<span class="t" style='left:1481.60px;top:880.41px;font-size:13.6px;line-height:13.6px;color:#202124;font-family:"Liberation Sans", sans-serif;letter-spacing:0.422px;'>Impressions</span>
<svg style="left:1440px;top:923px" width="26" height="26" viewBox="0 0 26 26"><circle cx="13" cy="13" r="11.8" fill="none" stroke="#5c8df6" stroke-width="2.4"/><circle cx="13" cy="13" r="7.2" fill="#5c8df6"/></svg>
<span class="t" style='left:1479.00px;top:929.71px;font-size:13.75px;line-height:13.75px;color:#757575;font-family:"Liberation Sans", sans-serif;letter-spacing:0.153px;'>Descending</span>
<svg style="left:1440px;top:974.2px" width="26" height="26" viewBox="0 0 26 26"><circle cx="13" cy="13" r="11.9" fill="none" stroke="#6b6b6b" stroke-width="2.2"/></svg>
<span class="t" style='left:1479.00px;top:981.00px;font-size:13.75px;line-height:13.75px;color:#757575;font-family:"Liberation Sans", sans-serif;letter-spacing:0.285px;'>Ascending</span>
<div class="a" style="left:1434px;top:1034px;width:308px;height:1px;background:#dadce0;"></div>
<span class="t" style='left:1440.70px;top:1057.42px;font-size:13.3px;line-height:13.3px;color:#757575;font-family:"Liberation Sans", sans-serif;font-weight:700;letter-spacing:0.058px;'>Default date range</span>
<svg style="left:1757px;top:154.4px" width="28" height="28" viewBox="0 0 28 28"><g fill="none" stroke="#616161" stroke-width="2.2"><rect x="2.2" y="1.8" width="23.4" height="23.8"/><path d="M2.2 9.7 H25.6 M2.2 17.6 H25.6"/></g><g fill="#616161"><rect x="5.3" y="4.8" width="2.3" height="2.3"/><rect x="5.3" y="12.6" width="2.3" height="2.3"/><rect x="5.3" y="20.4" width="2.3" height="2.3"/></g></svg>
<span class="t" style='left:1797.00px;top:157.00px;font-size:21.8px;line-height:21.8px;color:#202124;font-family:"Liberation Sans", sans-serif;letter-spacing:-0.516px;-webkit-text-stroke:.25px;'>Data</span>
<div class="a" style="left:1749px;top:213px;width:295.5px;height:38px;background:#f1f3f4;border-radius:11px;"></div>
<svg style="left:1755.6px;top:219.8px" width="22.5" height="22.5" viewBox="0 0 24 24" ><path fill="#5f6368" d="M15.5 14h-.79l-.28-.27C15.41 12.59 16 11.11 16 9.5 16 5.91 13.09 3 9.5 3S3 5.91 3 9.5 5.91 16 9.5 16c1.61 0 3.09-.59 4.23-1.57l.27.28v.79l5 4.99L20.49 19l-4.99-5zm-6 0C7.01 14 5 11.99 5 9.5S7.01 5 9.5 5 14 7.01 14 9.5 11.99 14 9.5 14z"/></svg>
<span class="t" style='left:1784.50px;top:224.01px;font-size:15px;line-height:15px;color:#9aa0a6;font-family:"Liberation Sans", sans-serif;letter-spacing:-0.206px;'>Search</span>
<div class="a" style="left:1755.8px;top:274.3px;width:21.6px;height:21.5px;background:#7b96bb;border-radius:2px;"></div>
<svg style="left:1763px;top:282px" width="8" height="7.4" viewBox="0 0 8 7.4"><path d="M0 2.3 H4.2 V0 L8 3.7 L4.2 7.4 V5.1 H0 Z" fill="#fff"/></svg>
<span class="t" style='left:1786.40px;top:279.41px;font-size:14.6px;line-height:14.6px;color:#202124;font-family:"Liberation Sans", sans-serif;letter-spacing:-0.352px;-webkit-text-stroke:.35px;'>IQM Reports</span>
<svg style="left:2025px;top:274px" width="16" height="24" viewBox="0 0 16 24"><path d="M3.5 4.5 L8 9 L12.5 4.5 M3.5 19.5 L8 15 L12.5 19.5" fill="none" stroke="#444" stroke-width="1.5"/></svg>
<div class="a" style="left:1749px;top:307px;width:296px;height:1px;background:#c8cacf;"></div>
<span class="t" style='left:1759.70px;top:319.91px;font-size:13.2px;line-height:13.2px;color:#98cf9c;font-family:"Liberation Mono", "DejaVu Sans Mono", monospace;font-weight:700;transform:scaleX(0.7789);transform-origin:0 50%;'>ABC</span>
<span class="t" style='left:1793.00px;top:319.00px;font-size:13.6px;line-height:13.6px;color:#202124;font-family:"Liberation Sans", sans-serif;letter-spacing:-0.031px;'>Age Group</span>
<span class="t" style='left:1759.70px;top:348.33px;font-size:13.2px;line-height:13.2px;color:#98cf9c;font-family:"Liberation Mono", "DejaVu Sans Mono", monospace;font-weight:700;transform:scaleX(0.7789);transform-origin:0 50%;'>ABC</span>
<span class="t" style='left:1793.00px;top:347.42px;font-size:13.6px;line-height:13.6px;color:#202124;font-family:"Liberation Sans", sans-serif;letter-spacing:0.233px;'>Campaign</span>
<span class="t" style='left:1759.70px;top:376.74px;font-size:13.2px;line-height:13.2px;color:#98cf9c;font-family:"Liberation Mono", "DejaVu Sans Mono", monospace;font-weight:700;transform:scaleX(0.7789);transform-origin:0 50%;'>ABC</span>
<span class="t" style='left:1793.00px;top:375.84px;font-size:13.6px;line-height:13.6px;color:#202124;font-family:"Liberation Sans", sans-serif;letter-spacing:0.151px;'>Campaign Group</span>
<span class="t" style='left:1759.70px;top:405.16px;font-size:13.2px;line-height:13.2px;color:#98cf9c;font-family:"Liberation Mono", "DejaVu Sans Mono", monospace;font-weight:700;transform:scaleX(0.7789);transform-origin:0 50%;'>ABC</span>
<span class="t" style='left:1793.00px;top:404.26px;font-size:13.6px;line-height:13.6px;color:#202124;font-family:"Liberation Sans", sans-serif;letter-spacing:0.101px;'>Campaign Group ID</span>
<span class="t" style='left:1759.70px;top:433.58px;font-size:13.2px;line-height:13.2px;color:#98cf9c;font-family:"Liberation Mono", "DejaVu Sans Mono", monospace;font-weight:700;transform:scaleX(0.7789);transform-origin:0 50%;'>ABC</span>
<span class="t" style='left:1793.00px;top:432.69px;font-size:13.6px;line-height:13.6px;color:#202124;font-family:"Liberation Sans", sans-serif;letter-spacing:0.116px;'>Campaign ID</span>
<span class="t" style='left:1759.70px;top:462.00px;font-size:13.2px;line-height:13.2px;color:#98cf9c;font-family:"Liberation Mono", "DejaVu Sans Mono", monospace;font-weight:700;transform:scaleX(0.7789);transform-origin:0 50%;'>ABC</span>
<span class="t" style='left:1793.00px;top:461.11px;font-size:13.6px;line-height:13.6px;color:#202124;font-family:"Liberation Sans", sans-serif;letter-spacing:0.266px;'>Campaign Status</span>
<span class="t" style='left:1759.70px;top:490.42px;font-size:13.2px;line-height:13.2px;color:#98cf9c;font-family:"Liberation Mono", "DejaVu Sans Mono", monospace;font-weight:700;transform:scaleX(0.7789);transform-origin:0 50%;'>ABC</span>
<span class="t" style='left:1793.00px;top:489.53px;font-size:13.6px;line-height:13.6px;color:#202124;font-family:"Liberation Sans", sans-serif;letter-spacing:0.076px;'>Carrier</span>
<span class="t" style='left:1759.70px;top:518.85px;font-size:13.2px;line-height:13.2px;color:#98cf9c;font-family:"Liberation Mono", "DejaVu Sans Mono", monospace;font-weight:700;transform:scaleX(0.7789);transform-origin:0 50%;'>ABC</span>
<span class="t" style='left:1793.00px;top:517.95px;font-size:13.6px;line-height:13.6px;color:#202124;font-family:"Liberation Sans", sans-serif;letter-spacing:0.060px;'>Channel</span>
<svg style="left:1757.6px;top:541.3600000000001px" width="21.6" height="21.6" viewBox="0 0 24 24" ><path fill="#98cf9c" d="M12 2C6.48 2 2 6.48 2 12s4.48 10 10 10 10-4.48 10-10S17.52 2 12 2zm-1 17.93c-3.95-.49-7-3.85-7-7.93 0-.62.08-1.21.21-1.79L9 15v1c0 1.1.9 2 2 2v1.93zm6.9-2.54c-.26-.81-1-1.39-1.9-1.39h-1v-3c0-.55-.45-1-1-1H8v-2h2c.55 0 1-.45 1-1V7h2c1.1 0 2-.9 2-2v-.41c2.93 1.19 5 4.06 5 7.41 0 2.08-.8 3.97-2.1 5.39z"/></svg>
<span class="t" style='left:1793.00px;top:546.36px;font-size:13.6px;line-height:13.6px;color:#202124;font-family:"Liberation Sans", sans-serif;letter-spacing:0.193px;'>City</span>
<span class="t" style='left:1759.70px;top:575.69px;font-size:13.2px;line-height:13.2px;color:#98cf9c;font-family:"Liberation Mono", "DejaVu Sans Mono", monospace;font-weight:700;transform:scaleX(0.7789);transform-origin:0 50%;'>123</span>
<span class="t" style='left:1793.00px;top:574.78px;font-size:13.6px;line-height:13.6px;color:#202124;font-family:"Liberation Sans", sans-serif;letter-spacing:0.250px;'>Clicks</span>
<span class="t" style='left:1759.70px;top:604.10px;font-size:13.2px;line-height:13.2px;color:#98cf9c;font-family:"Liberation Mono", "DejaVu Sans Mono", monospace;font-weight:700;transform:scaleX(0.7789);transform-origin:0 50%;'>ABC</span>
<span class="t" style='left:1793.00px;top:603.20px;font-size:13.6px;line-height:13.6px;color:#202124;font-family:"Liberation Sans", sans-serif;letter-spacing:0.299px;'>Congressional District</span>
<span class="t" style='left:1759.70px;top:632.52px;font-size:13.2px;line-height:13.2px;color:#98cf9c;font-family:"Liberation Mono", "DejaVu Sans Mono", monospace;font-weight:700;transform:scaleX(0.7789);transform-origin:0 50%;'>ABC</span>
<span class="t" style='left:1793.00px;top:631.62px;font-size:13.6px;line-height:13.6px;color:#202124;font-family:"Liberation Sans", sans-serif;letter-spacing:0.266px;'>Connection Type</span>
<span class="t" style='left:1759.70px;top:660.94px;font-size:13.2px;line-height:13.2px;color:#98cf9c;font-family:"Liberation Mono", "DejaVu Sans Mono", monospace;font-weight:700;transform:scaleX(0.7789);transform-origin:0 50%;'>ABC</span>
<span class="t" style='left:1793.00px;top:660.05px;font-size:13.6px;line-height:13.6px;color:#202124;font-family:"Liberation Sans", sans-serif;letter-spacing:0.184px;'>County</span>
<span class="t" style='left:1759.70px;top:689.36px;font-size:13.2px;line-height:13.2px;color:#98cf9c;font-family:"Liberation Mono", "DejaVu Sans Mono", monospace;font-weight:700;transform:scaleX(0.7789);transform-origin:0 50%;'>ABC</span>
<span class="t" style='left:1793.00px;top:688.47px;font-size:13.6px;line-height:13.6px;color:#202124;font-family:"Liberation Sans", sans-serif;letter-spacing:0.054px;'>Creative</span>
<span class="t" style='left:1759.70px;top:717.78px;font-size:13.2px;line-height:13.2px;color:#98cf9c;font-family:"Liberation Mono", "DejaVu Sans Mono", monospace;font-weight:700;transform:scaleX(0.7789);transform-origin:0 50%;'>ABC</span>
<span class="t" style='left:1793.00px;top:716.89px;font-size:13.6px;line-height:13.6px;color:#202124;font-family:"Liberation Sans", sans-serif;letter-spacing:-0.050px;'>Creative ID</span>
<span class="t" style='left:1759.70px;top:746.21px;font-size:13.2px;line-height:13.2px;color:#98cf9c;font-family:"Liberation Mono", "DejaVu Sans Mono", monospace;font-weight:700;transform:scaleX(0.7789);transform-origin:0 50%;'>ABC</span>
<span class="t" style='left:1793.00px;top:745.31px;font-size:13.6px;line-height:13.6px;color:#202124;font-family:"Liberation Sans", sans-serif;letter-spacing:0.073px;'>Creative Type</span>
<span class="t" style='left:1759.70px;top:774.63px;font-size:13.2px;line-height:13.2px;color:#98cf9c;font-family:"Liberation Mono", "DejaVu Sans Mono", monospace;font-weight:700;transform:scaleX(0.7789);transform-origin:0 50%;'>123</span>
<span class="t" style='left:1793.00px;top:773.72px;font-size:13.6px;line-height:13.6px;color:#202124;font-family:"Liberation Sans", sans-serif;transform:scaleX(0.9016);transform-origin:0 50%;'>CTR %</span>
<span class="t" style='left:1759.70px;top:803.05px;font-size:13.2px;line-height:13.2px;color:#98cf9c;font-family:"Liberation Mono", "DejaVu Sans Mono", monospace;font-weight:700;transform:scaleX(0.7789);transform-origin:0 50%;'>123</span>
<span class="t" style='left:1793.00px;top:802.14px;font-size:13.6px;line-height:13.6px;color:#202124;font-family:"Liberation Sans", sans-serif;letter-spacing:0.083px;'>Daily Budget $</span>
<span class="t" style='left:1759.70px;top:831.46px;font-size:13.2px;line-height:13.2px;color:#98cf9c;font-family:"Liberation Mono", "DejaVu Sans Mono", monospace;font-weight:700;transform:scaleX(0.7789);transform-origin:0 50%;'>123</span>
<span class="t" style='left:1793.00px;top:830.56px;font-size:13.6px;line-height:13.6px;color:#202124;font-family:"Liberation Sans", sans-serif;letter-spacing:0.058px;'>Data Spent $</span>
<svg style="left:1758px;top:854.28px" width="21" height="21" viewBox="0 0 24 24" ><path fill="#98cf9c" d="M17 12h-5v5h5v-5zM16 1v2H8V1H6v2H5c-1.11 0-1.99.9-1.99 2L3 19c0 1.1.89 2 2 2h14c1.1 0 2-.9 2-2V5c0-1.1-.9-2-2-2h-1V1h-2zm3 18H5V8h14v11z"/></svg>
<span class="t" style='left:1793.00px;top:858.98px;font-size:13.6px;line-height:13.6px;color:#202124;font-family:"Liberation Sans", sans-serif;letter-spacing:0.094px;'>Date</span>
<svg style="left:1755.9px;top:889.6999999999999px" width="21.2" height="21.2" viewBox="0 0 21.2 21.2"><circle cx="10.6" cy="10.6" r="10.6" fill="#5383ec"/><path d="M10.6 3.6999999999999993 V17.5 M3.6999999999999993 10.6 H17.5" stroke="#fff" stroke-width="2.6"/></svg>
<span class="t" style='left:1794.00px;top:891.01px;font-size:15px;line-height:15px;color:#4b83ee;font-family:"Liberation Sans", sans-serif;letter-spacing:0.161px;-webkit-text-stroke:.35px;'>Add a field</span>
<svg style="left:1755.9px;top:921.6999999999999px" width="21.2" height="21.2" viewBox="0 0 21.2 21.2"><circle cx="10.6" cy="10.6" r="10.6" fill="#5383ec"/><path d="M10.6 3.6999999999999993 V17.5 M3.6999999999999993 10.6 H17.5" stroke="#fff" stroke-width="2.6"/></svg>
<span class="t" style='left:1794.00px;top:923.01px;font-size:15px;line-height:15px;color:#4b83ee;font-family:"Liberation Sans", sans-serif;letter-spacing:0.162px;-webkit-text-stroke:.35px;'>Add a parameter</span>
<div class="a" style="left:1749px;top:949px;width:296px;height:2px;background:#e4e4e7;"></div>
<div class="a" style="left:1743px;top:1029px;width:305px;height:1px;background:#dadce0;"></div>
<svg style="left:1752.8px;top:1043.0px" width="20.4" height="20.4" viewBox="0 0 20.4 20.4"><circle cx="10.2" cy="10.2" r="10.2" fill="#5383ec"/><path d="M10.2 3.5999999999999996 V16.799999999999997 M3.5999999999999996 10.2 H16.799999999999997" stroke="#fff" stroke-width="1.6"/></svg>
<span class="t" style='left:1790.00px;top:1043.51px;font-size:15px;line-height:15px;color:#4b83ee;font-family:"Liberation Sans", sans-serif;letter-spacing:-0.007px;-webkit-text-stroke:.35px;'>Add Data</span>
</body></html>
